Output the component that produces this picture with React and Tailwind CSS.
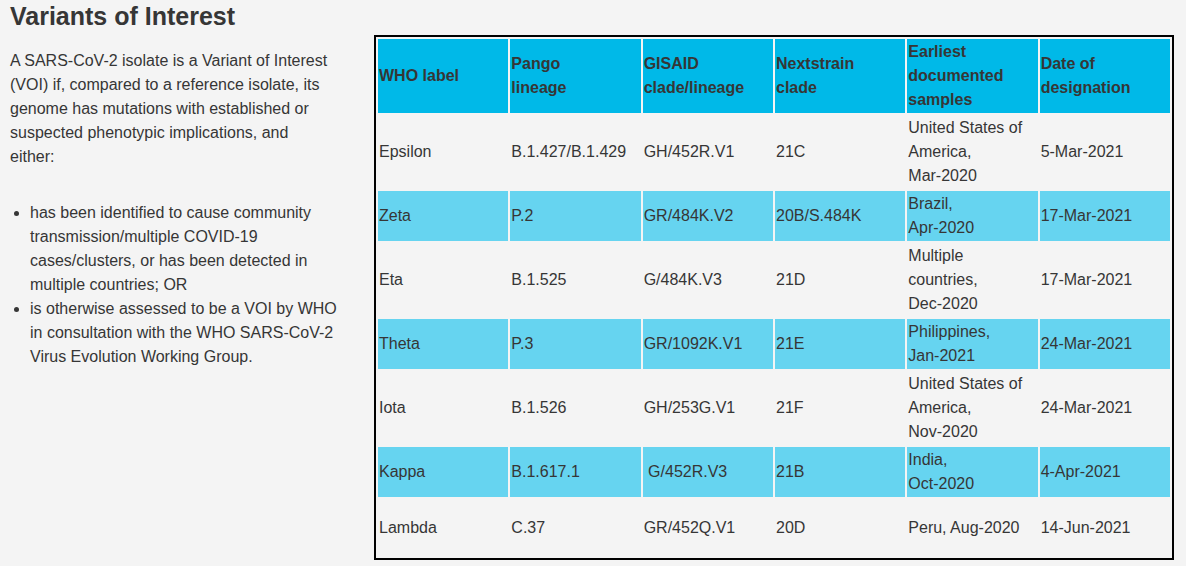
import React from "react";

const rows = [
  { hl: false, h: "h-[74px]", c: ["Epsilon", "B.1.427/B.1.429", "GH/452R.V1", "21C", ["United States of", "America,", "Mar-2020"], "5-Mar-2021"] },
  { hl: true, h: "h-[50px]", c: ["Zeta", "P.2", "GR/484K.V2", "20B/S.484K", ["Brazil,", "Apr-2020"], "17-Mar-2021"] },
  { hl: false, h: "h-[74px]", c: ["Eta", "B.1.525", "G/484K.V3", "21D", ["Multiple", "countries,", "Dec-2020"], "17-Mar-2021"] },
  { hl: true, h: "h-[50px]", c: ["Theta", "P.3", "GR/1092K.V1", "21E", ["Philippines,", "Jan-2021"], "24-Mar-2021"] },
  { hl: false, h: "h-[74px]", c: ["Iota", "B.1.526", "GH/253G.V1", "21F", ["United States of", "America,", "Nov-2020"], "24-Mar-2021"] },
  { hl: true, h: "h-[50px]", c: ["Kappa", "B.1.617.1", "\u00a0G/452R.V3", "21B", ["India,", "Oct-2020"], "4-Apr-2021"] },
  { hl: false, h: "h-[57px]", c: ["Lambda", "C.37", "GR/452Q.V1", "20D", ["Peru, Aug-2020"], "14-Jun-2021"] },
];

const headers = [
  ["WHO label"],
  ["Pango", "lineage"],
  ["GISAID", "clade/lineage"],
  ["Nextstrain", "clade"],
  ["Earliest", "documented", "samples"],
  ["Date of", "designation"],
];

function Lines({ v }) {
  if (Array.isArray(v)) {
    return v.map((l, i) => (
      <React.Fragment key={i}>
        {i > 0 && <br />}
        {l}
      </React.Fragment>
    ));
  }
  return v;
}

export default function App() {
  return (
    <div
      className="min-h-[566px] w-[1186px] bg-[#f4f4f4] text-[#363636] flex pl-[10px]"
      style={{ fontFamily: '"Liberation Sans", Arial, sans-serif' }}
    >
      <div className="w-[330px] shrink-0">
        <h2 className="text-[25px] leading-[30px] font-bold mt-[1px] whitespace-nowrap">
          Variants of Interest
        </h2>
        <p className="w-[322px] text-[16px] leading-[24px] mt-[18px]">
          A SARS-CoV-2 isolate is a Variant of Interest (VOI) if, compared to a
          reference isolate, its genome has mutations with established or
          suspected phenotypic implications, and either:
        </p>
        <ul className="list-disc pl-5 text-[16px] leading-[24px] mt-[32px]">
          <li>
            has been identified to cause community transmission/multiple
            COVID-19 cases/clusters, or has been detected in multiple
            countries; OR
          </li>
          <li>
            is otherwise assessed to be a VOI by WHO in consultation with the
            WHO SARS-CoV-2 Virus Evolution Working Group.
          </li>
        </ul>
      </div>
      <div className="ml-[34px] mt-[35px]">
        <table className="table-fixed w-[800px] border-2 border-black border-separate border-spacing-[2px] text-[16px] leading-[24px]">
          <thead>
            <tr className="h-[74px]">
              {headers.map((h, i) => (
                <th
                  key={i}
                  className="bg-[#00b9e8] text-left align-middle font-bold p-[1px]"
                >
                  <Lines v={h} />
                </th>
              ))}
            </tr>
          </thead>
          <tbody>
            {rows.map((r, i) => (
              <tr key={i} className={r.h}>
                {r.c.map((c, j) => (
                  <td
                    key={j}
                    className={`${r.hl ? "bg-[#66d4f0]" : "bg-[#f4f4f4]"} align-middle p-[1px] whitespace-nowrap`}
                  >
                    <Lines v={c} />
                  </td>
                ))}
              </tr>
            ))}
          </tbody>
        </table>
      </div>
    </div>
  );
}
